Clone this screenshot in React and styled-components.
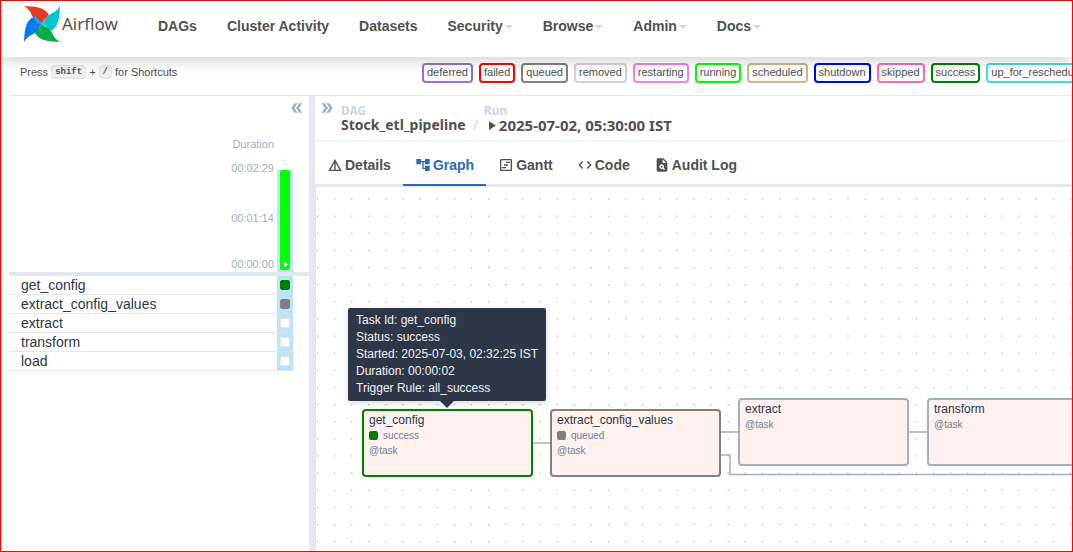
import React from 'react';
import styled, { createGlobalStyle } from 'styled-components';
import {
  MdAccountTree,
  MdCode,
  MdDetails,
  MdDoubleArrow,
  MdOutlineViewTimeline,
  MdPlagiarism,
  MdPlayArrow,
} from 'react-icons/md';

const sans = '"Liberation Sans", Arial, sans-serif';
const noto = '"Noto Sans", "Open Sans", sans-serif';

const GlobalStyle = createGlobalStyle`
  *, *::before, *::after { box-sizing: border-box; }
  body { margin: 0; background: #fff; color: #51504f; font-family: ${sans}; }
  button { font: inherit; color: inherit; background: none; border: 0; padding: 0; cursor: pointer; }
`;

const Page = styled.div`
  display: flex;
  flex-direction: column;
  min-height: 100vh;
  border: 1px solid #f00;
  overflow: hidden;
`;

const Header = styled.header`
  position: relative;
  display: flex;
  align-items: center;
  height: 56px;
  padding: 0 0 6px 23px;
  background: #fff;
  box-shadow: 0 2px 16px rgba(0, 0, 0, 0.22);
`;

const Brand = styled.a`
  display: flex;
  align-items: center;
  gap: 2px;
  width: 119px;
  padding-bottom: 4px;
  color: #51504f;
  font: 400 17px/24px ${noto};
  text-decoration: none;
`;

const Nav = styled.nav`
  display: flex;
`;

const NavLink = styled.a`
  display: flex;
  align-items: center;
  gap: 2px;
  padding: 0 15px;
  color: #51504f;
  font-size: 14px;
  font-weight: 700;
  line-height: 20px;
  text-decoration: none;
  white-space: nowrap;
`;

const Caret = styled.span`
  margin-top: 2px;
  border: 4px solid transparent;
  border-top-color: #e2d2e2;
  border-bottom: 0;
`;

const InfoBar = styled.div`
  display: flex;
  align-items: center;
  height: 39px;
  padding: 0 0 7px 11px;
  margin-left: 8px;
  border-bottom: 1px solid #e2e8f0;
  font-size: 11px;
  line-height: 15px;
  overflow: hidden;
`;

const Hint = styled.div`
  display: flex;
  align-items: center;
  gap: 3px;
  flex: 0 0 402px;
  padding-bottom: 1px;
`;

const Kbd = styled.kbd`
  padding: 1px 3px 0;
  border: 1px solid #e2e8f0;
  border-bottom-width: 2px;
  border-radius: 4px;
  background: #edf2f7;
  font: 700 9px/10px "Liberation Mono", monospace;
`;

const Legend = styled.div`
  display: flex;
  gap: 6px;
`;

const Badge = styled.span`
  padding: 0 3px 1px;
  border: 2px solid ${(p) => p.$color};
  border-radius: 4px;
  background: #fff;
  white-space: nowrap;
`;

const Body = styled.main`
  display: flex;
  flex: 1;
  margin-left: 8px;
`;

const GridPanel = styled.section`
  display: flex;
  flex-direction: column;
  flex: 0 0 300px;
`;

const PanelToggle = styled.button`
  display: flex;
  color: #a0aec0;
  transform: ${(p) => (p.$back ? 'rotate(180deg)' : 'none')};
`;

const GridTop = styled.div`
  display: flex;
  align-items: flex-start;
  justify-content: flex-end;
  height: 41px;
  padding: 4px 4px 0 0;
`;

const Chart = styled.div`
  display: flex;
  justify-content: flex-end;
  gap: 3px;
  height: 139px;
  padding-right: 16px;
  border-bottom: 4px solid #e2e8f0;
`;

const Axis = styled.div`
  display: flex;
  flex-direction: column;
  align-items: flex-end;
  color: #a0aec0;
  font-size: 11px;
  line-height: 14px;
`;

const AxisLabel = styled.span`
  margin-bottom: ${(p) => p.$gap}px;
`;

const RunColumn = styled.div`
  align-self: flex-end;
  width: 16px;
  height: 102px;
  padding: 0 3px 2px;
  background: #bee3f8;
`;

const RunBar = styled.button`
  display: flex;
  align-items: flex-end;
  justify-content: center;
  width: 10px;
  height: 100px;
  padding-bottom: 1px;
  border-radius: 2px;
  background: #0f0;
  color: #fff;
`;

const TaskTable = styled.table`
  width: 284px;
  border-collapse: separate;
  border-spacing: 0;
  color: #2d3748;
  font-size: 14px;
`;

const TaskName = styled.th`
  height: 19px;
  padding: 0 0 0 12px;
  border-bottom: 1px solid #e2e8f0;
  font-weight: 400;
  line-height: 18px;
  text-align: left;
`;

const TaskCell = styled.td`
  width: 16px;
  padding: 0 3px;
  border-bottom: 1px solid #cbe5f6;
  background: #bee3f8;
`;

const StatusBox = styled.span`
  display: block;
  width: ${(p) => p.$size || 10}px;
  height: ${(p) => p.$size || 10}px;
  border: 1px solid ${(p) => (p.$color === '#fff' ? '#e2e8f0' : p.$color)};
  border-radius: 2px;
  background: ${(p) => p.$color};
`;

const Divider = styled.div`
  flex: 0 0 6px;
  background: #e2e8f0;
`;

const DetailPanel = styled.section`
  display: flex;
  flex-direction: column;
  flex: 1;
  min-width: 0;
`;

const Crumbs = styled.div`
  display: flex;
  align-items: flex-start;
  height: 45px;
  padding: 4px 4px 0;
  border-bottom: 1px solid #edf2f7;
  font-family: ${noto};
  font-weight: 700;
  white-space: nowrap;
`;

const Crumb = styled.div`
  display: flex;
  flex-direction: column;
  padding-top: 4px;
  margin-left: ${(p) => p.$indent}px;
`;

const CrumbLabel = styled.span`
  color: #cbd5e0;
  font-size: 12px;
  line-height: 13px;
`;

const CrumbValue = styled.a`
  display: flex;
  align-items: center;
  color: #51504f;
  font-size: ${(p) => (p.$wide ? 15 : 14)}px;
  line-height: 16px;
  text-decoration: none;
`;

const Slash = styled.span`
  align-self: flex-end;
  margin-left: 7px;
  padding-bottom: 7px;
  color: #cbd5e0;
  font-size: 14px;
  font-weight: 400;
  line-height: 16px;
`;

const Tabs = styled.div`
  display: flex;
  height: 46px;
  border-bottom: 3px solid #e2e8f0;
`;

const Tab = styled.button`
  display: flex;
  align-items: center;
  gap: 2px;
  height: 45px;
  padding: 4px 12px 0;
  border-bottom: 2px solid ${(p) => (p.$active ? '#2b6cb0' : 'transparent')};
  color: ${(p) => (p.$active ? '#2b6cb0' : '#51504f')};
  font-size: 14px;
  font-weight: 700;
  line-height: 20px;
  white-space: nowrap;
`;

const Canvas = styled.div`
  position: relative;
  flex: 1;
  min-height: 320px;
  border-left: 1px solid #e2e8f0;
  overflow: hidden;
`;

const Backdrop = styled.svg`
  position: absolute;
  inset: 0;
  width: 100%;
  height: 100%;
`;

const Node = styled.article`
  position: absolute;
  left: ${(p) => p.$x}px;
  top: ${(p) => p.$y}px;
  width: 171px;
  height: 68px;
  padding: 1px 5px;
  border: 2px solid ${(p) => p.$color};
  border-radius: 4px;
  background: #fff1ee;
  color: #718096;
  font-size: 10px;
  line-height: 15px;
`;

const NodeTitle = styled.div`
  color: #2d3748;
  font-size: 12px;
  line-height: 16px;
`;

const NodeStatus = styled.div`
  display: flex;
  align-items: center;
  gap: 5px;
`;

const Tooltip = styled.div`
  position: absolute;
  left: 32px;
  top: 121px;
  padding: 4px 8px;
  border-radius: 2px;
  background: #2d3748;
  box-shadow: 0 2px 6px rgba(0, 0, 0, 0.15);
  color: #f1f2f4;
  font-size: 12px;
  line-height: 17px;
  white-space: nowrap;

  &::after {
    content: '';
    position: absolute;
    left: 50%;
    top: 100%;
    margin-left: -7px;
    border: 7px solid transparent;
    border-top-color: #2d3748;
    border-bottom: 0;
  }
`;

const navItems = [
  ['DAGs'], ['Cluster Activity'], ['Datasets'],
  ['Security', true], ['Browse', true], ['Admin', true], ['Docs', true],
];

const states = [
  ['deferred', 'mediumpurple'], ['failed', 'red'], ['queued', 'gray'],
  ['removed', 'lightgrey'], ['restarting', 'violet'], ['running', 'lime'],
  ['scheduled', 'tan'], ['shutdown', 'blue'], ['skipped', 'hotpink'],
  ['success', 'green'], ['up_for_reschedule', 'turquoise'],
];

const tasks = [
  ['get_config', 'green'], ['extract_config_values', 'gray'],
  ['extract', '#fff'], ['transform', '#fff'], ['load', '#fff'],
];

const tabs = [
  ['Details', MdDetails], ['Graph', MdAccountTree], ['Gantt', MdOutlineViewTimeline],
  ['Code', MdCode], ['Audit Log', MdPlagiarism],
];

const nodes = [
  { name: 'get_config', x: 46, y: 222, color: 'green', status: 'success' },
  { name: 'extract_config_values', x: 234, y: 222, color: 'gray', status: 'queued' },
  { name: 'extract', x: 422, y: 211, color: '#a0aec0' },
  { name: 'transform', x: 611, y: 211, color: '#a0aec0' },
];

const tooltipLines = [
  'Task Id: get_config', 'Status: success', 'Started: 2025-07-03, 02:32:25 IST',
  'Duration: 00:00:02', 'Trigger Rule: all_success',
];

const blades = [
  [0, '#e43921', '#ff7557'], [90, '#00c7d4', '#11e1ee'],
  [180, '#00ad46', '#04d659'], [270, '#017cee', '#0cb6ff'],
];

function Pinwheel() {
  return (
    <svg width="36" height="36" viewBox="0 0 36 36" aria-hidden="true">
      {blades.map(([angle, main, fold]) => (
        <g key={angle} transform={`rotate(${angle} 18 18)`}>
          <path fill={main} d="M0 0C10 .6 19 .8 24 7.500C25.500 10 25.500 12 24 13L18 18C17 14.500 13 15.500 10 12.500C7 9 7 4 0 0Z" />
          <path fill={fold} d="M25 9.500C25.500 11.500 25 12.500 24 13L18 18C18.500 15 20 12 25 9.500Z" />
        </g>
      ))}
    </svg>
  );
}

export default function App() {
  return (
    <Page>
      <GlobalStyle />
      <Header>
        <Brand href="#"><Pinwheel />Airflow</Brand>
        <Nav>
          {navItems.map(([label, menu]) => (
            <NavLink href="#" key={label}>{label}{menu && <Caret />}</NavLink>
          ))}
        </Nav>
      </Header>
      <InfoBar>
        <Hint>Press <Kbd>shift</Kbd> + <Kbd>/</Kbd> for Shortcuts</Hint>
        <Legend>
          {states.map(([label, color]) => <Badge key={label} $color={color}>{label}</Badge>)}
        </Legend>
      </InfoBar>
      <Body>
        <GridPanel>
          <GridTop>
            <PanelToggle $back aria-label="Collapse grid"><MdDoubleArrow size={16} /></PanelToggle>
          </GridTop>
          <Chart>
            <Axis>
              <AxisLabel $gap={10}>Duration</AxisLabel>
              <AxisLabel $gap={36}>00:02:29</AxisLabel>
              <AxisLabel $gap={32}>00:01:14</AxisLabel>
              <AxisLabel $gap={0}>00:00:00</AxisLabel>
            </Axis>
            <RunColumn>
              <RunBar aria-label="Running run"><MdPlayArrow size={9} /></RunBar>
            </RunColumn>
          </Chart>
          <TaskTable>
            <tbody>
              {tasks.map(([name, color]) => (
                <tr key={name}>
                  <TaskName scope="row">{name}</TaskName>
                  <TaskCell><StatusBox $color={color} /></TaskCell>
                </tr>
              ))}
            </tbody>
          </TaskTable>
        </GridPanel>
        <Divider />
        <DetailPanel>
          <Crumbs>
            <PanelToggle aria-label="Expand details"><MdDoubleArrow size={16} /></PanelToggle>
            <Crumb $indent={6}>
              <CrumbLabel>DAG</CrumbLabel>
              <CrumbValue href="#">Stock_etl_pipeline</CrumbValue>
            </Crumb>
            <Slash>/</Slash>
            <Crumb $indent={6}>
              <CrumbLabel>Run</CrumbLabel>
              <CrumbValue href="#" $wide><MdPlayArrow size={15} />2025-07-02, 05:30:00 IST</CrumbValue>
            </Crumb>
          </Crumbs>
          <Tabs role="tablist">
            {tabs.map(([label, Icon]) => (
              <Tab key={label} role="tab" aria-selected={label === 'Graph'} $active={label === 'Graph'}>
                <Icon size={16} />{label}
              </Tab>
            ))}
          </Tabs>
          <Canvas>
            <Backdrop aria-hidden="true">
              <defs>
                <pattern id="dots" x="1" y="11.500" width="17.110" height="17.125" patternUnits="userSpaceOnUse">
                  <circle cx=".6" cy=".6" r=".6" fill="#91919a" />
                </pattern>
              </defs>
              <rect width="100%" height="100%" fill="url(#dots)" />
              <g fill="none" stroke="#a0aec0" strokeWidth="1.500">
                <path d="M217 256H234" />
                <path d="M405 245H423" />
                <path d="M593 245H611" />
                <path d="M405 268H414V287.500H2000" />
              </g>
            </Backdrop>
            {nodes.map((n) => (
              <Node key={n.name} $x={n.x} $y={n.y} $color={n.color}>
                <NodeTitle>{n.name}</NodeTitle>
                {n.status && <NodeStatus><StatusBox $size={9} $color={n.color} />{n.status}</NodeStatus>}
                <div>@task</div>
              </Node>
            ))}
            <Tooltip role="tooltip">
              {tooltipLines.map((line) => <div key={line}>{line}</div>)}
            </Tooltip>
          </Canvas>
        </DetailPanel>
      </Body>
    </Page>
  );
}
